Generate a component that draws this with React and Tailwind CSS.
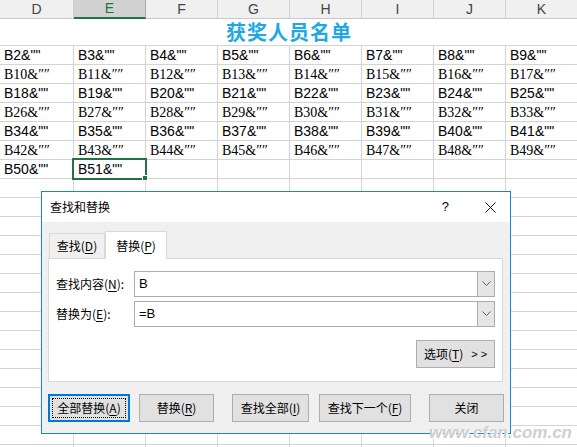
import React from "react";

const cols = ["D", "E", "F", "G", "H", "I", "J", "K"];
const sans = { fontFamily: '"Liberation Sans", Arial, sans-serif' };
const cjk = { fontFamily: '"Noto Sans CJK SC", "Noto Sans", sans-serif' };

function Cell({ i, children, serif }) {
  return (
    <div
      className={`${i === 0 ? "w-[74px]" : "w-[72px]"} shrink-0 h-full border-r border-[#d4d4d4] pl-[4px] flex items-center overflow-visible whitespace-nowrap text-black text-[14px]`}
      style={serif ? { fontFamily: '"Liberation Serif", "Noto Sans CJK SC", serif' } : sans}
    >
      {children}
    </div>
  );
}

function DataRow({ start, count = 8, serif }) {
  return (
    <div className="flex h-[19px] border-b border-[#d4d4d4]">
      {cols.map((c, i) => (
        <Cell key={c} i={i} serif={serif}>
          {i < count ? (serif ? `B${start + i}&\u2033\u2033` : `B${start + i}&""`) : ""}
        </Cell>
      ))}
    </div>
  );
}

function U({ children }) {
  return <span className="underline underline-offset-[2px]">{children}</span>;
}

function Chevron() {
  return (
    <svg width="9" height="6" viewBox="0 0 9 6">
      <polyline points="0.5,0.5 4.5,4.5 8.5,0.5" fill="none" stroke="#606060" strokeWidth="1" />
    </svg>
  );
}

function Combo({ value }) {
  return (
    <div className="flex h-[26px] flex-1 border border-[#acacac] bg-white">
      <div className="flex-1 flex items-center pl-[4px] text-[13px] text-black" style={sans}>{value}</div>
      <div className="w-[17px] border-l border-[#acacac] bg-[#e5e5e5] flex items-center justify-center">
        <Chevron />
      </div>
    </div>
  );
}

function Btn({ className, children, focus }) {
  return (
    <div
      className={`h-[28px] flex items-center justify-center text-[12px] text-black bg-[#e1e1e1] ${focus ? "border-2 border-[#0078d7] p-[2px]" : "border border-[#adadad]"} ${className}`}
      style={cjk}
    >
      {focus ? (
        <div className="w-full h-full border border-dotted border-black flex items-center justify-center">{children}</div>
      ) : (
        children
      )}
    </div>
  );
}

export default function App() {
  const rows = [];
  const starts = [2, 10, 18, 26, 34, 42];
  starts.forEach((s, idx) => rows.push(<DataRow key={s} start={s} serif={idx % 2 === 1} />));
  rows.push(<DataRow key={50} start={50} count={2} />);
  for (let k = 0; k < 15; k++) rows.push(<DataRow key={"e" + k} start={0} count={0} />);

  return (
    <div className="relative w-[577px] h-[447px] overflow-hidden bg-white">
      {/* column headers */}
      <div className="flex h-[19px] bg-[#f0f0f0]" style={sans}>
        {cols.map((c, i) => (
          <div
            key={c}
            className={`${i === 0 ? "w-[74px]" : "w-[72px]"} shrink-0 h-full border-r flex items-center justify-center text-[14px] ${
              c === "E"
                ? "bg-[#d2d2d2] border-b-2 border-b-[#217346] border-r-[#ababab] text-[#217346]"
                : "border-b border-b-[#c8c8c8] border-r-[#d0d0d0] text-[#444444]"
            }`}
          >
            {c}
          </div>
        ))}
      </div>
      {/* title row */}
      <div className="h-[27px] border-b border-[#d4d4d4] flex items-center justify-center w-[578px]">
        <span className="text-[20px] font-bold text-[#1ea8e4] tracking-[1px]" style={cjk}>获奖人员名单</span>
      </div>
      {rows}

      {/* selection */}
      <div className="absolute left-[72px] top-[158px] w-[75px] h-[22px] border-2 border-[#217346]" />
      <div className="absolute left-[142px] top-[175px] w-[6px] h-[6px] bg-[#217346] border border-white" />

      {/* dialog */}
      <div className="absolute left-[41px] top-[191px] w-[470px] h-[243px] border border-[#1883d7] bg-[#f0f0f0] flex flex-col" style={cjk}>
        <div className="h-[30px] bg-white flex items-center pl-[8px] pr-[14px] text-[12px] text-black">
          <span className="flex-1">查找和替换</span>
          <span className="mr-[36px] text-[13px]" style={sans}>?</span>
          <svg width="11" height="11" viewBox="0 0 11 11">
            <path d="M0.5 0.5 L10.5 10.5 M10.5 0.5 L0.5 10.5" stroke="#111" strokeWidth="1" />
          </svg>
        </div>
        <div className="flex items-end h-[36px] pl-[7px]">
          <div className="h-[25px] w-[56px] border border-b-0 border-[#d9d9d9] flex items-center justify-center text-[12px] text-black">
            查找(<U>D</U>)
          </div>
          <div className="h-[28px] w-[62px] bg-white border border-b-0 border-[#d9d9d9] flex items-center justify-center text-[12px] text-black -mb-[1px] relative z-10">
            替换(<U>P</U>)
          </div>
        </div>
        <div className="mx-[6px] mr-[7px] h-[124px] bg-white border border-[#d9d9d9] pt-[12px] px-[7px] flex flex-col">
          <div className="flex items-center">
            <div className="w-[78px] text-[12px] text-black">查找内容(<U>N</U>):</div>
            <Combo value="B" />
          </div>
          <div className="flex items-center mt-[4px]">
            <div className="w-[78px] text-[12px] text-black">替换为(<U>E</U>):</div>
            <Combo value="=B" />
          </div>
          <div className="flex justify-end mt-[13px]">
            <Btn className="w-[79px] gap-[8px]">
              <span>选项(<U>T</U>)</span>
              <span className="text-[11px]" style={sans}>&gt; &gt;</span>
            </Btn>
          </div>
        </div>
        <div className="flex mt-[12px] pl-[6px]">
          <Btn focus className="w-[82px]">全部替换(<U>A</U>)</Btn>
          <Btn className="w-[75px] ml-[9px]">替换(<U>R</U>)</Btn>
          <Btn className="w-[77px] ml-[18px]">查找全部(<U>I</U>)</Btn>
          <Btn className="w-[92px] ml-[10px]">查找下一个(<U>F</U>)</Btn>
          <Btn className="w-[75px] ml-[18px]">关闭</Btn>
        </div>
      </div>

      {/* watermark */}
      <div
        className="absolute right-[5px] top-[423px] whitespace-nowrap text-[17px] leading-[20px] font-bold italic text-[#cfcfcf]"
        style={{ fontFamily: '"Liberation Sans", Arial, sans-serif', textShadow: "1px 1px 0 #ffffff" }}
      >
        www.cfan.com.cn
      </div>
    </div>
  );
}
